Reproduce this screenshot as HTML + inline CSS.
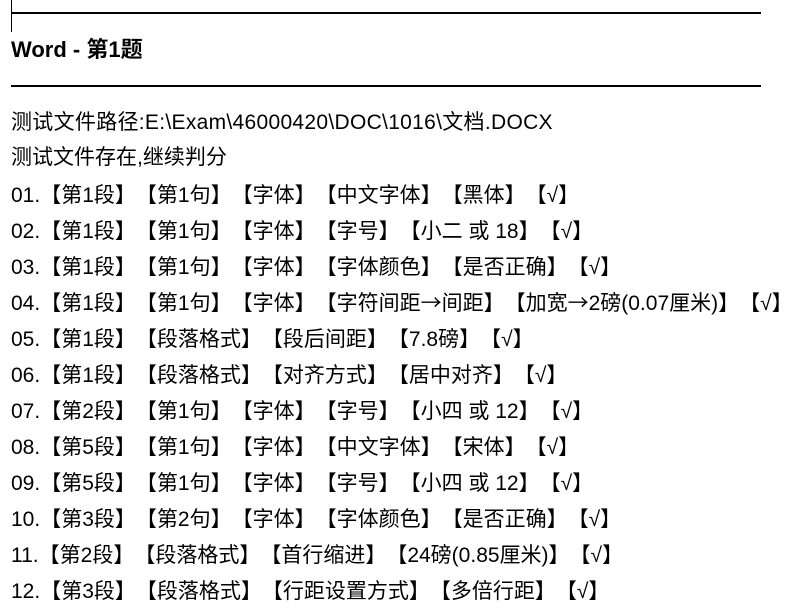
<!DOCTYPE html>
<html><head><meta charset="utf-8"><style>
body{margin:0;width:800px;height:614px;background:#fff;overflow:hidden;position:relative;font-family:"Liberation Sans","Noto Sans CJK SC",sans-serif;color:#000}
.r{position:absolute;left:11px;width:750px;height:2px;background:#000}
.t{position:absolute;left:11px;font-size:21px;line-height:24px;white-space:nowrap}
.o,.c{display:inline-block;width:21px;font-family:"Noto Sans CJK SC",sans-serif}
.o{text-align:right}.c{text-align:left}
.a{font-family:"Noto Sans CJK SC",sans-serif}
</style></head><body>
<div class="r" style="top:12px"></div>
<div style="position:absolute;left:11px;top:0;width:1px;height:32px;background:#000"></div>
<div class="t" style="top:38px;font-weight:bold;font-size:22px">Word - 第1题</div>
<div class="r" style="top:85px"></div>
<div class="t" style="top:111px;letter-spacing:0.3px">测试文件路径:E:\Exam\46000420\DOC\1016\文档.DOCX</div>
<div class="t" style="top:146px">测试文件存在,继续判分</div>
<div class="t" style="top:182px">01.<span class="o">【</span>第1段<span class="c">】</span><span class="o">【</span>第1句<span class="c">】</span><span class="o">【</span>字体<span class="c">】</span><span class="o">【</span>中文字体<span class="c">】</span><span class="o">【</span>黑体<span class="c">】</span><span class="o">【</span>√<span class="c">】</span></div>
<div class="t" style="top:218px">02.<span class="o">【</span>第1段<span class="c">】</span><span class="o">【</span>第1句<span class="c">】</span><span class="o">【</span>字体<span class="c">】</span><span class="o">【</span>字号<span class="c">】</span><span class="o">【</span>小二 或 18<span class="c">】</span><span class="o">【</span>√<span class="c">】</span></div>
<div class="t" style="top:254px">03.<span class="o">【</span>第1段<span class="c">】</span><span class="o">【</span>第1句<span class="c">】</span><span class="o">【</span>字体<span class="c">】</span><span class="o">【</span>字体颜色<span class="c">】</span><span class="o">【</span>是否正确<span class="c">】</span><span class="o">【</span>√<span class="c">】</span></div>
<div class="t" style="top:290px">04.<span class="o">【</span>第1段<span class="c">】</span><span class="o">【</span>第1句<span class="c">】</span><span class="o">【</span>字体<span class="c">】</span><span class="o">【</span>字符间距<span class="a">→</span>间距<span class="c">】</span><span class="o">【</span>加宽<span class="a">→</span>2磅(0.07厘米)<span class="c">】</span><span class="o">【</span>√<span class="c">】</span></div>
<div class="t" style="top:326px">05.<span class="o">【</span>第1段<span class="c">】</span><span class="o">【</span>段落格式<span class="c">】</span><span class="o">【</span>段后间距<span class="c">】</span><span class="o">【</span>7.8磅<span class="c">】</span><span class="o">【</span>√<span class="c">】</span></div>
<div class="t" style="top:362px">06.<span class="o">【</span>第1段<span class="c">】</span><span class="o">【</span>段落格式<span class="c">】</span><span class="o">【</span>对齐方式<span class="c">】</span><span class="o">【</span>居中对齐<span class="c">】</span><span class="o">【</span>√<span class="c">】</span></div>
<div class="t" style="top:398px">07.<span class="o">【</span>第2段<span class="c">】</span><span class="o">【</span>第1句<span class="c">】</span><span class="o">【</span>字体<span class="c">】</span><span class="o">【</span>字号<span class="c">】</span><span class="o">【</span>小四 或 12<span class="c">】</span><span class="o">【</span>√<span class="c">】</span></div>
<div class="t" style="top:434px">08.<span class="o">【</span>第5段<span class="c">】</span><span class="o">【</span>第1句<span class="c">】</span><span class="o">【</span>字体<span class="c">】</span><span class="o">【</span>中文字体<span class="c">】</span><span class="o">【</span>宋体<span class="c">】</span><span class="o">【</span>√<span class="c">】</span></div>
<div class="t" style="top:470px">09.<span class="o">【</span>第5段<span class="c">】</span><span class="o">【</span>第1句<span class="c">】</span><span class="o">【</span>字体<span class="c">】</span><span class="o">【</span>字号<span class="c">】</span><span class="o">【</span>小四 或 12<span class="c">】</span><span class="o">【</span>√<span class="c">】</span></div>
<div class="t" style="top:506px">10.<span class="o">【</span>第3段<span class="c">】</span><span class="o">【</span>第2句<span class="c">】</span><span class="o">【</span>字体<span class="c">】</span><span class="o">【</span>字体颜色<span class="c">】</span><span class="o">【</span>是否正确<span class="c">】</span><span class="o">【</span>√<span class="c">】</span></div>
<div class="t" style="top:542px">11.<span class="o">【</span>第2段<span class="c">】</span><span class="o">【</span>段落格式<span class="c">】</span><span class="o">【</span>首行缩进<span class="c">】</span><span class="o">【</span>24磅(0.85厘米)<span class="c">】</span><span class="o">【</span>√<span class="c">】</span></div>
<div class="t" style="top:578px">12.<span class="o">【</span>第3段<span class="c">】</span><span class="o">【</span>段落格式<span class="c">】</span><span class="o">【</span>行距设置方式<span class="c">】</span><span class="o">【</span>多倍行距<span class="c">】</span><span class="o">【</span>√<span class="c">】</span></div>
</body></html>
